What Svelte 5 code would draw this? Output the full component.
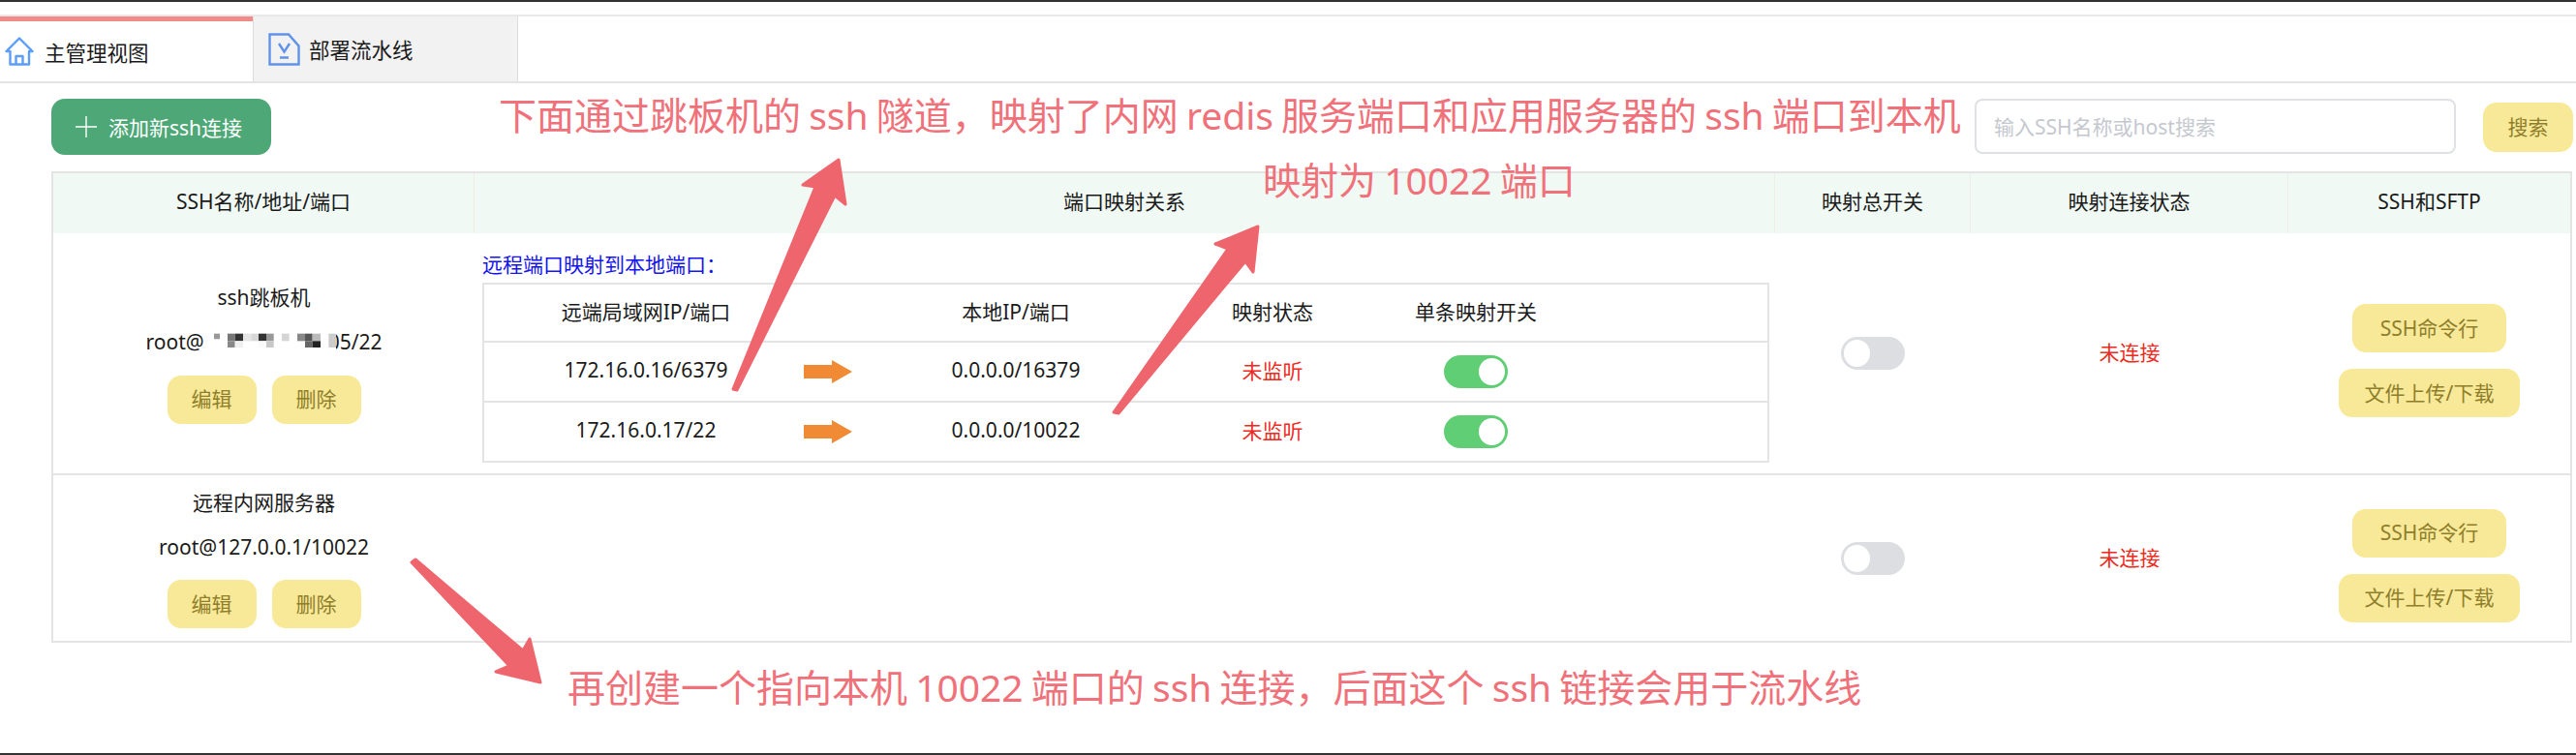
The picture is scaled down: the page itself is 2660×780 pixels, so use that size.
<script>
  const mosaic = [
    [30,35,18,17,'#999'],[72,35,23,23,'#777'],[72,58,23,20,'#888'],[95,35,25,23,'#333'],[95,58,25,20,'#f0f0f0'],
    [120,35,25,23,'#e5e5e5'],[145,35,23,23,'#d8d8d8'],[168,35,24,23,'#333'],[192,35,23,23,'#999'],[192,58,23,20,'#c8c8c8'],
    [168,58,24,20,'#fafafa'],[240,35,23,23,'#d5d5d5'],[288,35,24,23,'#888'],[312,35,23,23,'#555'],[335,35,25,23,'#bbb'],
    [312,58,23,20,'#666'],[335,58,25,20,'#222'],[385,35,23,43,'#ccc'],[408,35,25,23,'#555']
  ];
  const mappings = [
    { remote: '172.16.0.16/6379', local: '0.0.0.0/16379' },
    { remote: '172.16.0.17/22', local: '0.0.0.0/10022' }
  ];
  const heads = ['SSH名称/地址/端口', '端口映射关系', '映射总开关', '映射连接状态', 'SSH和SFTP'];
</script>

<div class="page">
  <div class="topline"></div>
  <div class="tabs">
    <div class="tab active">
      <svg class="home" width="30" height="30" viewBox="0 0 30 30" fill="none" stroke="#5b9df8" stroke-width="2.4" stroke-linejoin="round">
        <path d="M15 1.5 1.5 15H5.5V28.5H25V15H28.5Z" /><path d="M11.5 28.5V20H18.5V28.5" />
      </svg>
      <span>主管理视图</span>
    </div>
    <div class="tab second">
      <svg class="doc" width="33" height="34" viewBox="0 0 33 34" fill="none" stroke="#6092ea" stroke-width="2.4">
        <path d="M1.5 1.5H21L31.5 13.5V32.5H1.5Z" /><path d="M11 11 16.5 19.5 22 11M12 25.5H21" />
      </svg>
      <span>部署流水线</span>
    </div>
  </div>

  <div class="toolbar">
    <button class="add">
      <svg width="22" height="22" viewBox="0 0 22 22" stroke="#fff" stroke-width="1.4"><path d="M11 0V22M0 11H22" /></svg>
      <span>添加新ssh连接</span>
    </button>
    <div class="search">
      <input placeholder="输入SSH名称或host搜索" />
      <button class="y search-btn">搜索</button>
    </div>
  </div>

  <div class="table">
    <div class="thead">
      {#each heads as h}<div class="th">{h}</div>{/each}
    </div>

    <div class="row first">
      <div class="namecell">
        <div class="line">ssh跳板机</div>
        <div class="line">root@<svg class="mask" width="136" height="20" viewBox="0 30 408 60">
          {#each mosaic as m}<rect x={m[0]} y={m[1]} width={m[2]} height={m[3]} fill={m[4]} />{/each}
        </svg>05/22</div>
        <div class="acts"><button class="y small">编辑</button><button class="y small">删除</button></div>
      </div>
      <div class="mapcell">
        <div class="label">远程端口映射到本地端口：</div>
        <div class="inner">
          <div class="ir ih">
            <div>远端局域网IP/端口</div><div></div><div>本地IP/端口</div><div>映射状态</div><div>单条映射开关</div>
          </div>
          {#each mappings as m}
            <div class="ir">
              <div>{m.remote}</div>
              <div class="arrowcell">
                <svg width="50" height="24" viewBox="0 0 50 24"><polygon points="0,5 29,5 29,0 50,12 29,24 29,19 0,19" fill="#f08a35" /></svg>
              </div>
              <div>{m.local}</div>
              <div class="red">未监听</div>
              <div class="swcell"><span class="switch on"><i></i></span></div>
            </div>
          {/each}
        </div>
      </div>
      <div class="center"><span class="switch"><i></i></span></div>
      <div class="center red up">未连接</div>
      <div class="sftp"><button class="y cmd">SSH命令行</button><button class="y file">文件上传/下载</button></div>
    </div>

    <div class="row second-row">
      <div class="namecell">
        <div class="line">远程内网服务器</div>
        <div class="line">root@127.0.0.1/10022</div>
        <div class="acts"><button class="y small">编辑</button><button class="y small">删除</button></div>
      </div>
      <div></div>
      <div class="center"><span class="switch"><i></i></span></div>
      <div class="center red up">未连接</div>
      <div class="sftp"><button class="y cmd">SSH命令行</button><button class="y file">文件上传/下载</button></div>
    </div>
  </div>

  <div class="bottomline"></div>

  <svg class="overlay" width="2660" height="780" viewBox="0 0 2660 780" fill="#ee656d" stroke="#ee656d" stroke-width="3" stroke-linejoin="round">
    <polygon points="757,402 842,193 829,191 866,165 873,211 862,202 761,403" />
    <polygon points="1150,426 1268,257 1255,252 1299,234 1294,281 1286,270 1155,427" />
    <polygon points="425,581 526,688 512,694 558,705 547,660 540,672 429,578" />
  </svg>
  <div class="note n1">下面通过跳板机的 ssh 隧道，映射了内网 redis 服务端口和应用服务器的 ssh 端口到本机</div>
  <div class="note n2">映射为 10022 端口</div>
  <div class="note n3">再创建一个指向本机 10022 端口的 ssh 连接，后面这个 ssh 链接会用于流水线</div>
</div>

<style>
  :global(body) { margin: 0; background: #fff; }
  .page {
    position: relative; width: 2660px; height: 780px; overflow: hidden;
    display: flex; flex-direction: column; background: #fff;
    font-family: "Noto Sans", "Noto Sans CJK SC", sans-serif; font-size: 21px; color: #1a1a1a;
  }
  .topline { height: 2px; background: #333; flex: none; }
  .bottomline { height: 2px; background: #333; margin-top: auto; flex: none; }
  .tabs {
    flex: none; display: flex; height: 67px; margin-top: 13px;
    border-top: 2px solid #e8e8e8; border-bottom: 2px solid #e4e4e4;
  }
  .tab { box-sizing: border-box; display: flex; align-items: center; height: 67px; }
  .tab.active { width: 261px; border-top: 5px solid #f28a8a; padding-left: 5px; gap: 11px; }
  .tab.second { width: 274px; background: #f2f2f2; border-left: 1px solid #ddd; border-right: 1px solid #ddd; padding-left: 15px; gap: 9px; }
  .tab span { font-size: 21.5px; }
  .toolbar {
    flex: none; box-sizing: border-box; height: 91px; padding: 16px 3px 0 53px;
    display: flex; justify-content: space-between; align-items: flex-start;
  }
  button { font-family: inherit; font-size: 21px; border: 0; padding: 0; cursor: pointer; }
  .add {
    width: 227px; height: 58px; background: #4ea776; color: #fff; border-radius: 14px;
    display: flex; align-items: center; padding-left: 25px; gap: 12px; box-sizing: border-box;
  }
  .search { display: flex; gap: 28px; align-items: flex-start; }
  input {
    box-sizing: border-box; width: 497px; height: 57px; border: 2px solid #dfe1e6; border-radius: 8px;
    padding: 0 18px; font-family: inherit; font-size: 21px; outline: none;
  }
  input::placeholder { color: #c5c8ce; }
  .y { background: #f8e998; color: #8f7e2b; border-radius: 14px; height: 50px; padding: 0 0 3px; }
  .search-btn { width: 93px; height: 51px; margin-top: 4px; }
  .cmd { width: 159px; }
  .file { width: 187px; }
  .table {
    flex: none; width: 2603px; margin-left: 53px; box-sizing: border-box;
    border: 2px solid #e4e4e4;
  }
  .thead, .row { display: grid; grid-template-columns: 435px 1343px 202px 328px 1fr; }
  .thead { height: 62px; background: #f0f9f4; }
  .th { display: flex; align-items: center; justify-content: center; border-right: 1px solid #efece4; padding-bottom: 6px; }
  .th:last-child { border-right: 0; }
  .row.first { height: 250px; border-bottom: 2px solid #e4e4e4; box-sizing: border-box; }
  .row.second-row { height: 171px; }
  .namecell { display: flex; flex-direction: column; align-items: center; justify-content: center; padding-bottom: 7px; }
  .line { box-sizing: border-box; height: 47px; padding-bottom: 6px; display: flex; align-items: center; white-space: nowrap; }
  .mask { position: relative; margin: 0 -8px 0 0; background: #fff; }
  .acts { display: flex; gap: 16px; margin-top: 8px; }
  .small { width: 92px; height: 50px; }
  .mapcell { padding: 21px 0 0 8px; }
  .label { color: #1414f0; height: 30px; line-height: 22px; }
  .inner { width: 1329px; box-sizing: border-box; border: 2px solid #e4e4e4; }
  .ir {
    display: grid; grid-template-columns: 334px 46px 338px 192px 228px 1fr; height: 62px; align-items: center; text-align: center;
    border-top: 2px solid #e4e4e4; box-sizing: border-box;
  }
  .ir > div { padding-bottom: 5px; }
  .ir > .arrowcell, .ir > .swcell { padding-bottom: 0; }
  .ih { border-top: 0; height: 58px; }
  .arrowcell { display: flex; margin-left: -4px; }
  .swcell { display: flex; justify-content: center; }
  .red { color: #ec2b22; }
  .center { display: flex; align-items: center; justify-content: center; }
  .up { padding-bottom: 4px; }
  .switch {
    display: inline-block; width: 66px; height: 34px; border-radius: 17px; background: #dcdee2; position: relative;
  }
  .switch i { position: absolute; left: 3px; top: 3px; width: 27px; height: 28px; border-radius: 50%; background: #fff; }
  .switch.on { background: #5fce75; }
  .switch.on i { left: auto; right: 3px; }
  .sftp { display: flex; flex-direction: column; align-items: center; justify-content: center; gap: 17px; padding-top: 15px; }
  .overlay { position: absolute; left: 0; top: 0; pointer-events: none; }
  .note { position: absolute; color: #f0717a; font-size: 39px; line-height: 50px; white-space: nowrap; word-spacing: -2px; }
  .n1 { left: 515px; top: 94px; }
  .n2 { left: 1304px; top: 161px; }
  .n3 { left: 586px; top: 685px; }
</style>
